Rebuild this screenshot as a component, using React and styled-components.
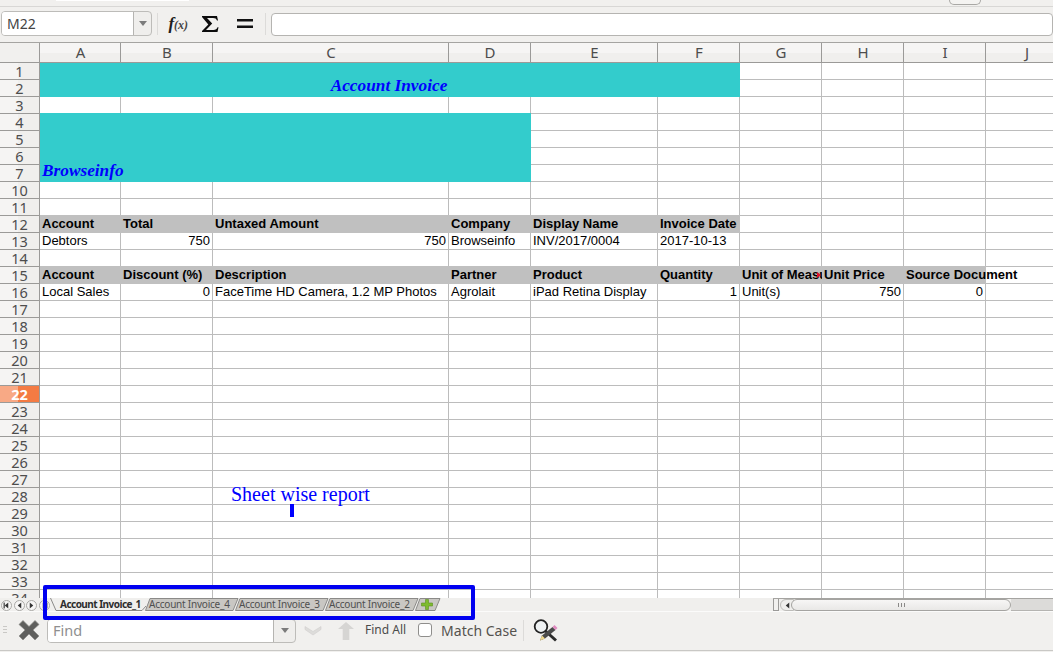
import React from "react";
import styled, { createGlobalStyle } from "styled-components";

const Global = createGlobalStyle`
  html, body { margin: 0; padding: 0; background: #f1f0ee; }
  * { box-sizing: border-box; }
`;

const Window = styled.div`
  position: relative;
  width: 1053px;
  height: 652px;
  overflow: hidden;
  display: flex;
  flex-direction: column;
  background: #f1f0ee;
  font-family: "Noto Sans", sans-serif;
`;

const TopStrip = styled.div`
  height: 7px;
  flex: none;
  display: flex;
  align-items: flex-start;
  justify-content: space-between;
  padding: 0 72px 0 56px;
  border-bottom: 1px solid #d8d7d5;
`;
const StripField = styled.div`
  width: 133px;
  height: 1px;
  background: #fff;
`;
const StripButton = styled.div`
  width: 32px;
  height: 5px;
  border: 1px solid #a9a8a5;
  border-top: none;
  border-radius: 0 0 5px 5px;
  background: #f4f3f1;
`;

const FormulaBar = styled.div`
  height: 36px;
  flex: none;
  display: flex;
  align-items: center;
  padding: 0 0 1px 1px;
  border-bottom: 1px solid #a5a4a1;
`;
const NameBox = styled.div`
  width: 153px;
  height: 25px;
  display: flex;
  border: 1px solid #bdbcb9;
  border-radius: 4px;
  background: #efeeec;
  overflow: hidden;
  margin-top: -1px;
`;
const NameValue = styled.div`
  width: 132px;
  background: #fff;
  border-right: 1px solid #b5b4b1;
  font-size: 14px;
  line-height: 24px;
  padding-left: 5px;
  color: #444;
`;
const DropZone = styled.div`
  flex: 1;
  display: flex;
  align-items: center;
  justify-content: center;
`;
const Caret = styled.span`
  width: 0;
  height: 0;
  border-left: 4px solid transparent;
  border-right: 4px solid transparent;
  border-top: 5px solid #7b7b7b;
`;
const BarSep = styled.div`
  width: 1px;
  height: 22px;
  background: #dcdbd9;
  margin: ${(p) => p.$margin};
`;
const FxIcon = styled.div`
  width: 21px;
  flex: none;
  font-family: "Liberation Serif", serif;
  font-style: italic;
  font-weight: bold;
  font-size: 17px;
  line-height: 24px;
  color: #1d1d1d;
  white-space: nowrap;
  small {
    font-size: 12px;
    color: #444;
  }
`;
const FormulaInput = styled.div`
  width: 790px;
  height: 23px;
  margin-left: 5px;
  background: #fff;
  border: 1px solid #b5b4b1;
  border-radius: 4px;
`;

const Sheet = styled.div`
  flex: none;
  height: 555px;
  overflow: hidden;
  display: grid;
  grid-template-columns: 40px 81px 92px 236px 82px 127px 82px 82px 82px 82px 82px;
  grid-template-rows: 20px;
  grid-auto-rows: 17px;
  background: #fff;
`;
const Corner = styled.div`
  background: #f1f0ee;
  border-right: 1px solid #9b9a98;
  border-bottom: 1px solid #9b9a98;
`;
const ColHead = styled.div`
  background: linear-gradient(#f6f5f4 0 55%, #f0efed 55%);
  border-right: 1px solid #9b9a98;
  border-bottom: 1px solid #9b9a98;
  text-align: center;
  padding-left: 1px;
  font-size: 15px;
  line-height: 19px;
  color: #4d4d4d;
`;
const RowHead = styled.div`
  background: ${(p) =>
    p.$active
      ? "linear-gradient(90deg, #f8a985 0 18px, #f47b43 18px)"
      : "linear-gradient(90deg, #f5f4f3 0 18px, #f0efed 18px)"};
  border-right: 1px solid #9b9a98;
  border-bottom: 1px solid #9b9a98;
  text-align: center;
  font-size: 14.5px;
  font-weight: ${(p) => (p.$active ? 700 : 400)};
  line-height: 16px;
  color: ${(p) => (p.$active ? "#fff" : "#4d4d4d")};
`;
const Cell = styled.div`
  position: relative;
  z-index: ${(p) => (p.$over ? 2 : 0)};
  grid-column: ${(p) => (p.$cols ? `span ${p.$cols}` : "auto")};
  grid-row: ${(p) => (p.$rows ? `span ${p.$rows}` : "auto")};
  border-right: 1px solid #bcbcbc;
  border-bottom: 1px solid #bcbcbc;
  padding: 0 2px;
  font-family: "Liberation Sans", Arial, sans-serif;
  font-size: 13px;
  line-height: 16px;
  color: #000;
  white-space: nowrap;
  text-align: ${(p) => (p.$right ? "right" : "left")};
  ${(p) => p.$clip && "overflow: hidden; padding-right: 0;"}
`;
const GrayCell = styled(Cell)`
  z-index: ${(p) => (p.$over ? 2 : 1)};
  background: #c0c0c0;
  border: none;
  box-shadow: 0 -1px 0 #c0c0c0;
  font-weight: 700;
`;
const TealCell = styled(Cell)`
  z-index: 1;
  display: flex;
  align-items: flex-end;
  justify-content: ${(p) => (p.$center ? "center" : "flex-start")};
  background: #33cccc;
  border: none;
  box-shadow: ${(p) => (p.$center ? "none" : "0 -1px 0 #33cccc")};
  padding-bottom: 1px;
  padding-right: ${(p) => (p.$center ? 4 : 2)}px;
  font-family: "Liberation Serif", serif;
  font-size: 17.3px;
  font-weight: 700;
  font-style: italic;
  line-height: 21px;
  color: #0000ff;
`;
const OverflowMark = styled.span`
  position: absolute;
  right: 1px;
  top: 5px;
  width: 0;
  height: 0;
  border-top: 3px solid transparent;
  border-bottom: 3px solid transparent;
  border-left: 4px solid #e0112b;
`;

const TabBar = styled.div`
  flex: none;
  height: 14px;
  display: flex;
  align-items: stretch;
  background: #f0efed;
  border-bottom: 1px solid #fbfbfa;
`;
const NavGroup = styled.div`
  width: 50px;
  flex: none;
  display: flex;
  align-items: center;
  gap: 1.5px;
  padding-left: 1px;
  margin-bottom: -1px;
`;
const NavButton = styled.div`
  width: 11px;
  height: 11px;
  flex: none;
  border-radius: 50%;
  border: 1px solid #aaa9a6;
  background: #f7f6f5;
  display: flex;
  align-items: center;
  justify-content: center;
`;
const Tabs = styled.div`
  width: 723px;
  flex: none;
  display: flex;
  align-items: stretch;
`;
const ActiveTab = styled.div`
  position: relative;
  width: 97px;
  flex: none;
  padding-left: 10px;
  font-size: 10px;
  font-weight: 700;
  line-height: 12px;
  letter-spacing: -0.53px;
  color: #2d2d2d;
  white-space: nowrap;
  svg { position: absolute; left: 0; top: 0; }
  span { position: relative; }
`;
const Tab = styled.div`
  position: relative;
  width: 90px;
  flex: none;
  margin-left: ${(p) => p.$shift || 0}px;
  padding-left: 4px;
  font-size: 10px;
  line-height: 12px;
  letter-spacing: -0.22px;
  color: #4f4f4f;
  white-space: nowrap;
  svg { position: absolute; left: 0; top: 0; }
  span { position: relative; }
`;
const Scroller = styled.div`
  flex: 1;
  display: flex;
  align-items: stretch;
  border-top: 1px solid #a5a4a1;
`;
const SplitHandle = styled.div`
  width: 6px;
  flex: none;
  background: #f1f0ee;
  border-left: 1px solid #9b9a98;
  border-right: 1px solid #9b9a98;
  border-bottom: 1px solid #9b9a98;
`;
const ScrollLeft = styled.div`
  width: 14px;
  flex: none;
  margin-left: 1px;
  border: 1px solid #bdbcb9;
  border-radius: 6px 0 0 6px;
  background: #efeeec;
  display: flex;
  align-items: center;
  justify-content: center;
`;
const Thumb = styled.div`
  width: 220px;
  flex: none;
  margin-left: -3px;
  border: 1px solid #a5a4a1;
  border-radius: 6px;
  background: linear-gradient(#f7f6f5, #e9e8e6);
  display: flex;
  align-items: center;
  justify-content: center;
  gap: 2px;
  i {
    width: 1px;
    height: 4px;
    background: #8a8987;
  }
`;
const Trough = styled.div`
  flex: 1;
  background: #dcdbd9;
  border-bottom: 1px solid #b5b4b1;
`;

const FindBar = styled.div`
  flex: none;
  height: 39px;
  display: flex;
  align-items: center;
  border-bottom: 1px solid #c9c8c5;
  padding: 0 0 1px 3px;
`;
const Grip = styled.div`
  width: 4px;
  height: 9px;
  flex: none;
  background: repeating-linear-gradient(#c9c8c5 0 1px, transparent 1px 3px);
`;
const FindField = styled.div`
  width: 249px;
  height: 24px;
  margin: 0 0 0 7px;
  display: flex;
  border: 1px solid #bdbcb9;
  border-radius: 4px;
  overflow: hidden;
  background: #efeeec;
`;
const FindText = styled.div`
  width: 226px;
  background: #fff;
  border-right: 1px solid #b5b4b1;
  font-size: 14.5px;
  line-height: 21px;
  padding-left: 5px;
  color: #8f8f8f;
`;
const FindAll = styled.div`
  margin: -3px 0 0 10px;
  font-size: 12px;
  color: #4b4b4b;
  white-space: nowrap;
`;
const CheckBox = styled.div`
  width: 14px;
  height: 14px;
  margin: -1px 0 0 12px;
  border: 1px solid #8f8e8c;
  border-radius: 3px;
  background: #fff;
`;
const MatchCase = styled.div`
  margin: -1px 0 0 9px;
  font-size: 14px;
  color: #55534f;
  white-space: nowrap;
`;
const FindSep = styled.div`
  width: 1px;
  height: 21px;
  margin: 0 9px 0 6px;
  background: #dcdbd9;
`;

const Frame = styled.div`
  position: absolute;
  left: 43px;
  top: 585px;
  width: 432px;
  height: 35px;
  border: 4px solid #0000f0;
  border-radius: 2px;
  z-index: 5;
`;
const Note = styled.div`
  position: absolute;
  left: 231px;
  top: 483px;
  font-family: "Liberation Serif", serif;
  font-size: 20px;
  line-height: 23px;
  color: #0000ff;
  white-space: nowrap;
  z-index: 5;
`;
const NoteMark = styled.div`
  position: absolute;
  left: 290px;
  top: 504px;
  width: 4px;
  height: 13px;
  background: #0000ff;
  z-index: 5;
`;

const COLS = ["A", "B", "C", "D", "E", "F", "G", "H", "I", "J"];
const ROWS = [1, 2, 3, 4, 5, 6, 7, ...Array.from({ length: 25 }, (_, i) => i + 10)];

const HEAD_12 = ["Account", "Total", "Untaxed Amount", "Company", "Display Name", "Invoice Date"];
const VALS_13 = [
  ["Debtors"], ["750", 1], ["750", 1], ["Browseinfo"], ["INV/2017/0004"], ["2017-10-13"],
];
const HEAD_15 = ["Account", "Discount (%)", "Description", "Partner", "Product", "Quantity", "Unit of Measure", "Unit Price", "Source Document"];
const VALS_16 = [
  ["Local Sales"], ["0", 1], ["FaceTime HD Camera, 1.2 MP Photos"], ["Agrolait"], ["iPad Retina Display"], ["1", 1], ["Unit(s)"], ["750", 1], ["0", 1],
];

function renderRow(row) {
  const out = [];
  const covered = row >= 5 && row <= 7 ? 4 : row === 2 ? 6 : 0;
  COLS.forEach((col, i) => {
    const key = `${col}${row}`;
    if (row === 1 && i === 0) {
      out.push(<TealCell key={key} $cols={6} $rows={2} $center>Account Invoice</TealCell>);
      return;
    }
    if (row === 1 && i < 6) return;
    if (row === 4 && i === 0) {
      out.push(<TealCell key={key} $cols={4} $rows={4}>Browseinfo</TealCell>);
      return;
    }
    if (row === 4 && i < 4) return;
    if (i < covered) return;
    if (row === 12 && i < HEAD_12.length) {
      out.push(<GrayCell key={key}>{HEAD_12[i]}</GrayCell>);
      return;
    }
    if (row === 15 && i < HEAD_15.length) {
      const clipped = i === 6;
      out.push(
        <GrayCell key={key} $clip={clipped} $over={i === 8}>
          {HEAD_15[i]}
          {clipped && <OverflowMark />}
        </GrayCell>
      );
      return;
    }
    const val = row === 13 ? VALS_13[i] : row === 16 ? VALS_16[i] : null;
    out.push(
      <Cell key={key} $right={val && val[1]}>
        {val ? val[0] : ""}
      </Cell>
    );
  });
  return out;
}

const SigmaIcon = () => (
  <svg width="18" height="18" viewBox="0 0 18 18" style={{ marginLeft: 12, flex: "none" }}>
    <path d="M1 1h15l1 4.500h-1c-.6-1.700-1.700-2.500-4-2.500H6l5.200 5.600L5 15h7.500c2.200 0 3.300-.8 4-2.700h1L16.500 17H1v-1l6.300-6.400L1 2z" fill="#0c0c0c" />
  </svg>
);
const EqualsIcon = () => (
  <svg width="16" height="10" viewBox="0 0 16 10" style={{ marginLeft: 18, flex: "none" }}>
    <rect x="0" y="0" width="16" height="2.500" fill="#111" />
    <rect x="0" y="6.500" width="16" height="2.500" fill="#111" />
  </svg>
);
const Arrow = ({ dir, bar }) => (
  <svg width="7" height="7" viewBox="0 0 6 6">
    {bar && <rect x={dir === "l" ? 0.5 : 4.5} y="0.5" width="1" height="5" fill="#333" />}
    <path d={dir === "l" ? "M4.500 .5v5L1.500 3z" : "M1.500 .5v5L4.500 3z"} fill="#333" />
  </svg>
);
const CloseIcon = () => (
  <svg width="22" height="22" viewBox="0 0 22 22" style={{ marginLeft: 11, marginTop: -1, flex: "none" }}>
    <path d="M5 1.500 11 7.500 17 1.500 21 5.500 15 11 21 17 17 21 11 15 5 21 1 17 7 11 1 5.500z" fill="#5f5f5d" stroke="#8b8b88" strokeWidth=".7" />
  </svg>
);
const ChevronIcon = () => (
  <svg width="18" height="11" viewBox="0 0 18 11" style={{ marginLeft: 8, marginTop: -1, flex: "none" }}>
    <path d="M1 1.500 9 6.500 17 1.500 17 4.500 9 10 1 4.500z" fill="#dddcda" stroke="#d0cfcd" strokeWidth=".6" />
  </svg>
);
const UpIcon = () => (
  <svg width="18" height="20" viewBox="0 0 18 20" style={{ marginLeft: 15, flex: "none" }}>
    <path d="M9 1 17 8H12.300V19H5.700V8H1z" fill="#d6d5d3" />
  </svg>
);
const ToolIcon = () => (
  <svg width="26" height="24" viewBox="0 0 26 24" style={{ flex: "none" }}>
    <path d="M12.500 12 23 21.500" stroke="#2b2b2b" strokeWidth="3" />
    <circle cx="8" cy="7.500" r="6.300" fill="#eef1f2" fillOpacity=".8" stroke="#222" strokeWidth="1.800" />
    <path d="M7 21.500 9 16.500 19.500 8 22.500 11 12 19.500z" fill="#4a4a4a" />
    <path d="M19.500 8 21.500 6 24.500 9 22.500 11z" fill="#e08ac0" />
    <path d="M7 21.500 9 16.500 12 19.500z" fill="#f1d98a" />
  </svg>
);
const TabShape = ({ w, active }) =>
  active ? (
    <svg width={w} height="13" viewBox={`0 0 ${w} 13`}>
      <path d={`M.5 0 6 12.500H${w - 5}L${w - 1} 8`} fill="none" stroke="#8b8a88" />
    </svg>
  ) : (
    <svg width={w + 4} height="13" viewBox={`0 0 ${w + 4} 13`}>
      <path d={`M5 .5H${w + 3}L${w - 2} 12.500H.5z`} fill="#c9c7c3" stroke="#8b8a88" />
    </svg>
  );
const PlusIcon = () => (
  <svg width="12" height="11" viewBox="0 0 12 11" style={{ position: "absolute", left: 6, top: 1 }}>
    <path d="M4.500 .5h3v3.500h4v3h-4v3.500h-3V7h-4V4h4z" fill="#7ebb2f" stroke="#5d8f1e" strokeWidth=".6" />
  </svg>
);

export default function App() {
  return (
    <Window>
      <Global />
      <TopStrip>
        <StripField />
        <StripButton />
      </TopStrip>
      <FormulaBar>
        <NameBox>
          <NameValue>M22</NameValue>
          <DropZone><Caret /></DropZone>
        </NameBox>
        <BarSep $margin="0 10px 0 5px" />
        <FxIcon>f<small>(x)</small></FxIcon>
        <SigmaIcon />
        <EqualsIcon />
        <BarSep $margin="0 0 0 12px" />
        <FormulaInput />
      </FormulaBar>
      <Sheet>
        <Corner />
        {COLS.map((c) => <ColHead key={c}>{c}</ColHead>)}
        {ROWS.map((r) => (
          <React.Fragment key={r}>
            <RowHead $active={r === 22}>{r}</RowHead>
            {renderRow(r)}
          </React.Fragment>
        ))}
      </Sheet>
      <TabBar>
        <NavGroup>
          <NavButton><Arrow dir="l" bar /></NavButton>
          <NavButton><Arrow dir="l" /></NavButton>
          <NavButton><Arrow dir="r" /></NavButton>
          <NavButton><Arrow dir="r" bar /></NavButton>
        </NavGroup>
        <Tabs>
          <ActiveTab><TabShape w={97} active /><span>Account Invoice_1</span></ActiveTab>
          <Tab $shift={-2}><TabShape w={90} /><span>Account Invoice_4</span></Tab>
          <Tab><TabShape w={90} /><span>Account Invoice_3</span></Tab>
          <Tab><TabShape w={90} /><span>Account Invoice_2</span></Tab>
          <Tab><TabShape w={22} /><PlusIcon /></Tab>
        </Tabs>
        <Scroller>
          <SplitHandle />
          <ScrollLeft><Arrow dir="l" /></ScrollLeft>
          <Thumb><i /><i /><i /></Thumb>
          <Trough />
        </Scroller>
      </TabBar>
      <FindBar>
        <Grip />
        <CloseIcon />
        <FindField>
          <FindText>Find</FindText>
          <DropZone><Caret /></DropZone>
        </FindField>
        <ChevronIcon />
        <UpIcon />
        <FindAll>Find All</FindAll>
        <CheckBox />
        <MatchCase>Match Case</MatchCase>
        <FindSep />
        <ToolIcon />
      </FindBar>
      <Note>Sheet wise report</Note>
      <NoteMark />
      <Frame />
    </Window>
  );
}
